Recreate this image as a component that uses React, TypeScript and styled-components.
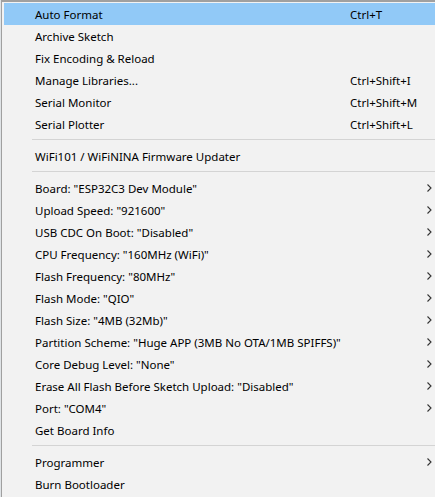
import React from 'react';
import styled, { createGlobalStyle } from 'styled-components';

const GlobalStyle = createGlobalStyle`
  html, body {
    margin: 0;
    padding: 0;
    background: #dfe3e6;
    overflow: hidden;
  }
`;

const Page = styled.div`
  width: 435px;
  height: 497px;
  overflow: hidden;
  padding-left: 1px;
  box-sizing: border-box;
`;

const Menu = styled.div`
  width: 450px;
  height: 497px;
  box-sizing: border-box;
  background: #f2f2f2;
  border-left: 1px solid #a0a0a0;
  border-top: 2px solid #a0a0a0;
  padding: 1px 0 0 2px;
  font-family: 'Segoe UI', 'Noto Sans', 'Open Sans', sans-serif;
  font-size: 11.5px;
  color: #000;
`;

const Row = styled.div<{ $active?: boolean }>`
  display: grid;
  grid-template-columns: 31px 315px 77px 1fr;
  align-items: center;
  height: 22px;
  white-space: nowrap;
  background: ${({ $active }) => ($active ? '#91c9f7' : 'transparent')};
`;

const Label = styled.span`
  grid-column: 2;
`;

const Shortcut = styled.span`
  grid-column: 3;
`;

const Arrow = styled.span`
  grid-column: 4;
  display: flex;
  align-items: center;
  height: 22px;
`;

const Separator = styled.div`
  height: 10px;
  box-sizing: border-box;
  padding: 4px 0 0 28px;

  &::after {
    content: '';
    display: block;
    height: 1px;
    background: #d4d4d4;
  }
`;

const Chevron = () => (
  <svg width="5" height="8" viewBox="0 0 5 8">
    <path d="M0.5 0.5 L4 4 L0.5 7.5" fill="none" stroke="#333" strokeWidth="1.1" />
  </svg>
);

type Item = { label: string; shortcut?: string; sub?: boolean; active?: boolean } | 'sep';

const items: Item[] = [
  { label: 'Auto Format', shortcut: 'Ctrl+T', active: true },
  { label: 'Archive Sketch' },
  { label: 'Fix Encoding & Reload' },
  { label: 'Manage Libraries...', shortcut: 'Ctrl+Shift+I' },
  { label: 'Serial Monitor', shortcut: 'Ctrl+Shift+M' },
  { label: 'Serial Plotter', shortcut: 'Ctrl+Shift+L' },
  'sep',
  { label: 'WiFi101 / WiFiNINA Firmware Updater' },
  'sep',
  { label: 'Board: "ESP32C3 Dev Module"', sub: true },
  { label: 'Upload Speed: "921600"', sub: true },
  { label: 'USB CDC On Boot: "Disabled"', sub: true },
  { label: 'CPU Frequency: "160MHz (WiFi)"', sub: true },
  { label: 'Flash Frequency: "80MHz"', sub: true },
  { label: 'Flash Mode: "QIO"', sub: true },
  { label: 'Flash Size: "4MB (32Mb)"', sub: true },
  { label: 'Partition Scheme: "Huge APP (3MB No OTA/1MB SPIFFS)"', sub: true },
  { label: 'Core Debug Level: "None"', sub: true },
  { label: 'Erase All Flash Before Sketch Upload: "Disabled"', sub: true },
  { label: 'Port: "COM4"', sub: true },
  { label: 'Get Board Info' },
  'sep',
  { label: 'Programmer', sub: true },
  { label: 'Burn Bootloader' },
];

const App: React.FC = () => {
  return (
    <>
      <GlobalStyle />
      <Page>
        <Menu>
          {items.map((item, i) =>
            item === 'sep' ? (
              <Separator key={i} />
            ) : (
              <Row key={i} $active={item.active}>
                <Label>{item.label}</Label>
                {item.shortcut && <Shortcut>{item.shortcut}</Shortcut>}
                {item.sub && (
                  <Arrow>
                    <Chevron />
                  </Arrow>
                )}
              </Row>
            )
          )}
        </Menu>
      </Page>
    </>
  );
};

export default App;
